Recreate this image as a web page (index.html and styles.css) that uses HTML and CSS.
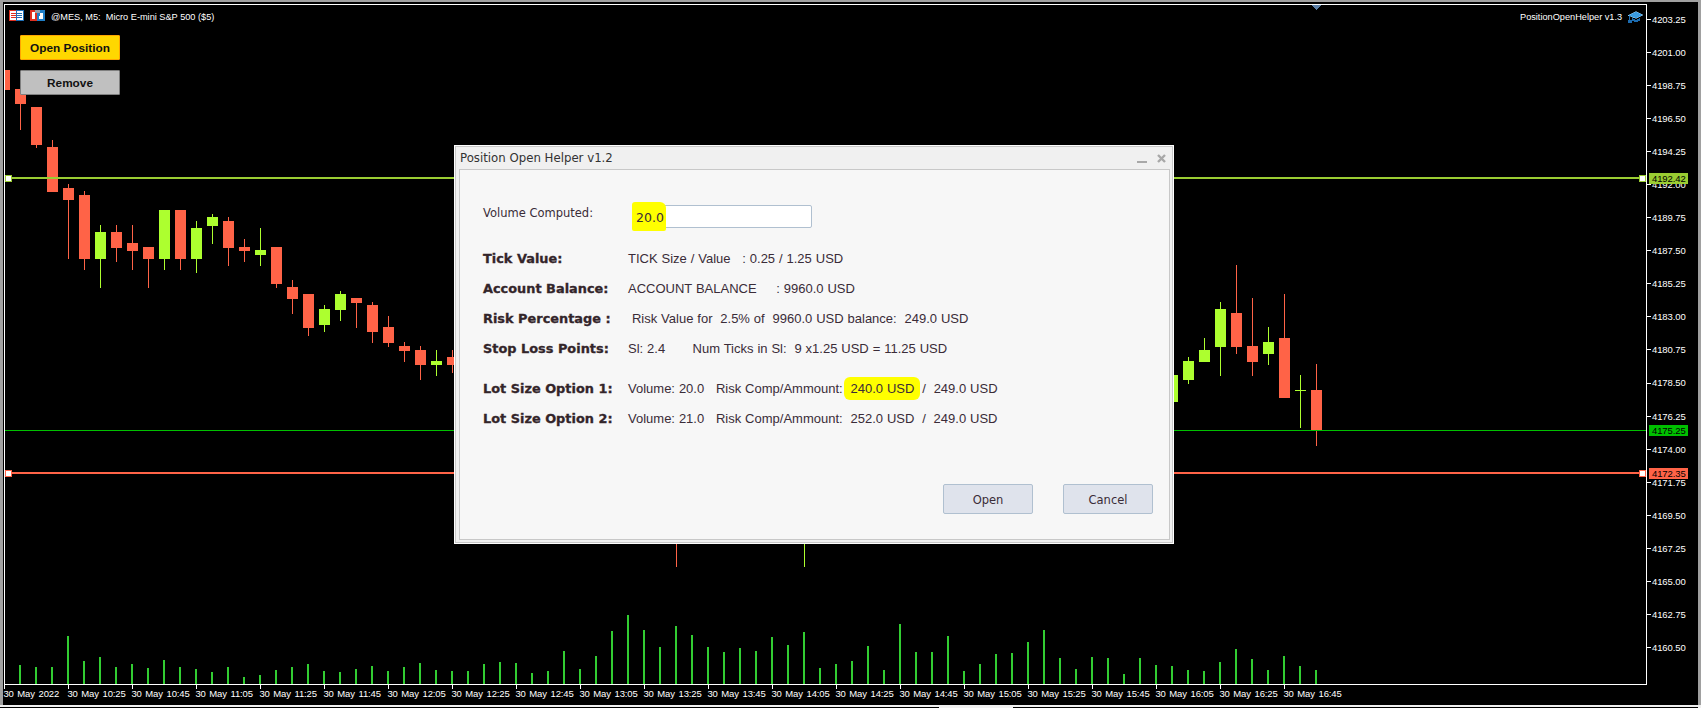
FILE: index.html
```html
<!DOCTYPE html>
<html>
<head>
<meta charset="utf-8">
<title>Position Open Helper</title>
<link rel="stylesheet" href="styles.css">
</head>
<body>
<div class="terminal">

<!-- chart: candles, volumes and axes -->
<svg class="chart" width="1701" height="708" viewBox="0 0 1701 708">
	<rect class="edge" x="0" y="0" width="1701" height="2"/>
	<rect class="edge" x="0" y="0" width="3" height="708"/>
	<rect class="edge" x="1698" y="0" width="3" height="708"/>
	<rect class="foot" x="0" y="705" width="1701" height="3"/>
	<rect class="foot-dark" x="0" y="707" width="939" height="1"/>
	<rect class="foot-dark" x="1013" y="707" width="685" height="1"/>

	<path class="frame" d="M4.5 4.5H1646.5V684.5H4.5Z"/>
	<path class="frame" d="M4.5 684V689M68.5 684V689M132.5 684V689M196.5 684V689M260.5 684V689M324.5 684V689M388.5 684V689M452.5 684V689M516.5 684V689M580.5 684V689M644.5 684V689M708.5 684V689M772.5 684V689M836.5 684V689M900.5 684V689M964.5 684V689M1028.5 684V689M1092.5 684V689M1156.5 684V689M1220.5 684V689M1284.5 684V689"/>
	<path class="frame" d="M1646 19.5H1651M1646 52.5H1651M1646 85.5H1651M1646 118.5H1651M1646 151.5H1651M1646 184.5H1651M1646 217.5H1651M1646 250.5H1651M1646 283.5H1651M1646 316.5H1651M1646 349.5H1651M1646 383.5H1651M1646 416.5H1651M1646 449.5H1651M1646 482.5H1651M1646 515.5H1651M1646 548.5H1651M1646 581.5H1651M1646 614.5H1651M1646 647.5H1651"/>
	<path class="arrow" d="M1311 5H1322L1316.5 10Z"/>

	<!-- wicks -->
	<path class="wick-red" d="M20.5 89V130M36.5 107V148M52.5 140V192M68.5 184V259M84.5 191V270M116.5 225V262M132.5 225V270M148.5 247V288M180.5 210V270M228.5 217V266M244.5 239V262M276.5 247V288M292.5 280V314M308.5 294V336M356.5 298V328M372.5 302V343M388.5 316V347M404.5 342V362M420.5 346V380M452.5 350V373M676.5 540V567M1236.5 265V354M1252.5 298V376M1284.5 294V398M1316.5 364V446"/>
	<path class="wick-green" d="M100.5 225V288M164.5 210V270M196.5 221V273M212.5 214V244M260.5 228V266M324.5 305V332M340.5 291V321M436.5 350V376M804.5 540V567M1188.5 357V384M1204.5 338V362M1220.5 302V376M1268.5 327V365M1300.5 375V428M1295 390.5H1306"/>

	<!-- bodies -->
	<path class="body-red" d="M5 70h5v20h-5zM15 89h11v15h-11zM31 107h11v38h-11zM47 147h11v45h-11zM63 188h11v12h-11zM79 195h11v64h-11zM111 232h11v16h-11zM127 243h11v8h-11zM143 247h11v12h-11zM175 210h11v49h-11zM223 221h11v27h-11zM239 247h11v4h-11zM271 247h11v37h-11zM287 287h11v12h-11zM303 294h11v34h-11zM351 298h11v5h-11zM367 305h11v27h-11zM383 327h11v16h-11zM399 346h11v5h-11zM415 350h11v15h-11zM447 357h8v8h-8zM1231 313h11v34h-11zM1247 346h11v16h-11zM1279 338h11v60h-11zM1311 390h11v41h-11z"/>
	<path class="body-green" d="M95 232h11v27h-11zM159 210h11v49h-11zM191 228h11v31h-11zM207 217h11v9h-11zM255 250h11v5h-11zM319 309h11v16h-11zM335 294h11v16h-11zM431 361h11v4h-11zM1167 375h11v27h-11zM1183 361h11v19h-11zM1199 350h11v12h-11zM1215 309h11v38h-11zM1263 342h11v12h-11z"/>

	<!-- volumes -->
	<path class="volume" d="M20 684v-19M36 684v-17M52 684v-17M68 684v-48M84 684v-23M100 684v-27M116 684v-17M132 684v-20M148 684v-16M164 684v-24M180 684v-17M196 684v-15M212 684v-12M228 684v-17M244 684v-7M260 684v-9M276 684v-14M292 684v-17M308 684v-20M324 684v-13M340 684v-12M356 684v-15M372 684v-18M388 684v-13M404 684v-17M420 684v-21M436 684v-14M452 684v-13M468 684v-13M484 684v-20M500 684v-22M516 684v-21M532 684v-11M548 684v-13M564 684v-33M580 684v-15M596 684v-28M612 684v-53M628 684v-69M644 684v-54M660 684v-37M676 684v-58M692 684v-49M708 684v-37M724 684v-32M740 684v-36M756 684v-33M772 684v-47M788 684v-39M804 684v-52M820 684v-16M836 684v-20M852 684v-23M868 684v-38M884 684v-14M900 684v-60M916 684v-32M932 684v-32M948 684v-48M964 684v-13M980 684v-20M996 684v-30M1012 684v-31M1028 684v-42M1044 684v-54M1060 684v-26M1076 684v-15M1092 684v-27M1108 684v-26M1124 684v-10M1140 684v-26M1156 684v-19M1172 684v-18M1188 684v-14M1204 684v-13M1220 684v-22M1236 684v-35M1252 684v-25M1268 684v-14M1284 684v-28M1300 684v-18M1316 684v-14"/>

	<!-- level lines -->
	<path class="line-sl" d="M5 178H1646"/>
	<path class="line-tp" d="M5 430.5H1646"/>
	<path class="line-en" d="M5 473H1646"/>
	<rect class="grip grip-sl" x="5.5" y="175.5" width="6" height="6"/>
	<rect class="grip grip-sl" x="1639.5" y="175.5" width="6" height="6"/>
	<rect class="grip grip-en" x="5.5" y="470.5" width="6" height="6"/>
	<rect class="grip grip-en" x="1639.5" y="470.5" width="6" height="6"/>

	<!-- price axis -->
	<g class="axis">
		<text x="1652" y="23">4203.25</text>
		<text x="1652" y="56">4201.00</text>
		<text x="1652" y="89">4198.75</text>
		<text x="1652" y="122">4196.50</text>
		<text x="1652" y="155">4194.25</text>
		<text x="1652" y="188">4192.00</text>
		<text x="1652" y="221">4189.75</text>
		<text x="1652" y="254">4187.50</text>
		<text x="1652" y="287">4185.25</text>
		<text x="1652" y="320">4183.00</text>
		<text x="1652" y="353">4180.75</text>
		<text x="1652" y="386">4178.50</text>
		<text x="1652" y="420">4176.25</text>
		<text x="1652" y="453">4174.00</text>
		<text x="1652" y="486">4171.75</text>
		<text x="1652" y="519">4169.50</text>
		<text x="1652" y="552">4167.25</text>
		<text x="1652" y="585">4165.00</text>
		<text x="1652" y="618">4162.75</text>
		<text x="1652" y="651">4160.50</text>
	</g>
	<rect class="tag-sl" x="1649" y="173" width="39" height="11"/>
	<rect class="tag-tp" x="1649" y="425" width="39" height="11"/>
	<rect class="tag-en" x="1649" y="468" width="39" height="11"/>
	<g class="axis axis-tag">
		<text x="1652" y="182">4192.42</text>
		<text x="1652" y="434">4175.25</text>
		<text x="1652" y="477">4172.35</text>
	</g>

	<!-- time axis -->
	<g class="axis axis-time">
		<text x="3.4" y="697">30 May 2022</text>
		<text x="67.4" y="697">30 May 10:25</text>
		<text x="131.4" y="697">30 May 10:45</text>
		<text x="195.4" y="697">30 May 11:05</text>
		<text x="259.4" y="697">30 May 11:25</text>
		<text x="323.4" y="697">30 May 11:45</text>
		<text x="387.4" y="697">30 May 12:05</text>
		<text x="451.4" y="697">30 May 12:25</text>
		<text x="515.4" y="697">30 May 12:45</text>
		<text x="579.4" y="697">30 May 13:05</text>
		<text x="643.4" y="697">30 May 13:25</text>
		<text x="707.4" y="697">30 May 13:45</text>
		<text x="771.4" y="697">30 May 14:05</text>
		<text x="835.4" y="697">30 May 14:25</text>
		<text x="899.4" y="697">30 May 14:45</text>
		<text x="963.4" y="697">30 May 15:05</text>
		<text x="1027.4" y="697">30 May 15:25</text>
		<text x="1091.4" y="697">30 May 15:45</text>
		<text x="1155.4" y="697">30 May 16:05</text>
		<text x="1219.4" y="697">30 May 16:25</text>
		<text x="1283.4" y="697">30 May 16:45</text>
	</g>

	<!-- header text and icons -->
	<text class="chart-title" x="51" y="20" xml:space="preserve">@MES, M5:  Micro E-mini S&amp;P 500 ($5)</text>
	<text class="chart-title" x="1520" y="20">PositionOpenHelper v1.3</text>

	<g class="icon-table">
		<rect class="ic-red" x="9.5" y="10.5" width="7" height="10"/>
		<rect class="ic-blue" x="16.5" y="10.5" width="7" height="10"/>
		<path class="ic-red" d="M11 13.5H16M11 15.5H16M11 17.5H16"/>
		<path class="ic-blue" d="M17 13.5H22M17 15.5H22M17 17.5H22"/>
	</g>
	<g class="icon-tpl">
		<path class="ic-fill-red" d="M30 10H37V21H30Z"/>
		<path class="ic-fill-blue" d="M37 10H45V21H37Z"/>
		<path class="ic-white" d="M32 12H35V19H32ZM40 13H43V19H39V16H40Z"/>
		<path class="ic-grey" d="M35 10H40V13H35Z"/>
	</g>
	<g class="icon-cap">
		<path class="ic-cap" d="M1628 15.5L1636 11.5L1643 15L1636 18.5Z"/>
		<path class="ic-cap-side" d="M1632 18V21L1636 22L1640 21V18L1636 20Z"/>
		<path class="ic-cap-pin" d="M1629.5 16V20M1628 20H1631V22H1628Z"/>
	</g>
</svg>

<a class="chart-btn btn-open" href="#">Open Position</a>
<a class="chart-btn btn-remove" href="#">Remove</a>

<!-- the EA window -->
<div class="dialog">
	<div class="dlg-title">
		<span>Position Open Helper v1.2</span>
		<span class="dlg-min"></span>
		<svg class="dlg-close" width="9" height="9" viewBox="0 0 9 9"><path d="M1 1L8 8M8 1L1 8"/></svg>
	</div>
	<div class="dlg-body">
		<div class="vol-row">
			<span class="vol-label">Volume Computed:</span>
			<div class="vol-box"><mark class="marker marker-vol">20.0</mark></div>
		</div>
		<div class="info-row"><b>Tick Value:</b><span>TICK Size / Value   : 0.25 / 1.25 USD</span></div>
		<div class="info-row"><b>Account Balance:</b><span>ACCOUNT BALANCE     : 9960.0 USD</span></div>
		<div class="info-row"><b>Risk Percentage :</b><span> Risk Value for  2.5% of  9960.0 USD balance:  249.0 USD</span></div>
		<div class="info-row"><b>Stop Loss Points:</b><span>Sl: 2.4       Num Ticks in Sl:  9 x1.25 USD = 11.25 USD</span></div>
		<div class="info-row lot-first"><b>Lot Size Option 1:</b><span>Volume: 20.0   Risk Comp/Ammount:  <mark class="marker marker-lot">240.0 USD</mark>  /  249.0 USD</span></div>
		<div class="info-row"><b>Lot Size Option 2:</b><span>Volume: 21.0   Risk Comp/Ammount:  252.0 USD  /  249.0 USD</span></div>
		<div class="dlg-buttons">
			<button class="dlg-btn">Open</button>
			<button class="dlg-btn">Cancel</button>
		</div>
	</div>
</div>

</div>
</body>
</html>
```

FILE: styles.css
```css
html, body {
	margin: 0;
	padding: 0;
	background-color: #000;
}

.terminal {
	position: relative;
	width: 1701px;
	height: 708px;
	overflow: hidden;
	background-color: #000;
}

.chart {
	display: block;
	shape-rendering: crispEdges;
}

.edge { fill: #a0a0a0; }
.foot { fill: #f0f0f0; }
.foot-dark { fill: #000; }
.frame { fill: none; stroke: #fff; stroke-width: 1; }
.arrow { fill: #5b7fa6; }

.wick-red { fill: none; stroke: #ff6347; stroke-width: 1; }
.wick-green { fill: none; stroke: #adff2f; stroke-width: 1; }
.body-red { fill: #ff6347; }
.body-green { fill: #adff2f; }
.volume { fill: none; stroke: #32cd32; stroke-width: 2; }

.line-sl { fill: none; stroke: #9acd32; stroke-width: 2; }
.line-tp { fill: none; stroke: #00c000; stroke-width: 1; }
.line-en { fill: none; stroke: #ff6347; stroke-width: 2; }
.grip { fill: #fff; stroke-width: 1; }
.grip-sl { stroke: #9acd32; }
.grip-en { stroke: #ff6347; }
.tag-sl { fill: #9acd32; }
.tag-tp { fill: #00c000; }
.tag-en { fill: #ff6347; }

.axis text {
	font-family: "Liberation Sans", Arial, sans-serif;
	font-size: 9.5px;
	fill: #fff;
	letter-spacing: -0.1px;
}
.axis-tag text { fill: #000; }
.axis-time text { letter-spacing: -0.15px; word-spacing: 1.2px; }

.chart-title {
	font-family: "Liberation Sans", Arial, sans-serif;
	font-size: 9.2px;
	fill: #fff;
	white-space: pre;
}

.ic-red { fill: #fff; stroke: #e03020; stroke-width: 1; }
.ic-blue { fill: #fff; stroke: #1f6fb5; stroke-width: 1; }
.ic-fill-red { fill: #e03020; }
.ic-fill-blue { fill: #1f7fc8; }
.ic-white { fill: #fff; }
.ic-grey { fill: #9aa0a8; }
.ic-cap { fill: #3b9be0; stroke: #9fd4f5; stroke-width: 0.5; }
.ic-cap-side { fill: #1c6cb0; }
.ic-cap-pin { fill: #1c6cb0; stroke: #1c6cb0; stroke-width: 1; }

/* buttons on the chart */
.chart-btn {
	position: absolute;
	left: 20px;
	width: 100px;
	height: 25px;
	box-sizing: border-box;
	border: 1px solid;
	border-radius: 1px;
	font-family: "Liberation Sans", Arial, sans-serif;
	font-size: 11.8px;
	font-weight: bold;
	line-height: 25px;
	text-align: center;
	text-decoration: none;
	color: #111;
}
.btn-open {
	top: 35px;
	background-color: #ffd700;
	border-color: #ffa500;
}
.btn-remove {
	top: 70px;
	background-color: #c0c0c0;
	border-color: #808080;
}

/* dialog */
.dialog {
	position: absolute;
	left: 454px;
	top: 145px;
	width: 720px;
	height: 399px;
	box-sizing: border-box;
	display: flex;
	flex-direction: column;
	padding: 0 3px 3px 4px;
	border: 1px solid #fff;
	box-shadow: inset 0 0 0 1px #c8c8c8;
	background-color: #f0f0f0;
	font-family: "Liberation Sans", Arial, sans-serif;
	color: #3a2c38;
}

.dlg-title {
	display: flex;
	align-items: center;
	gap: 10px;
	height: 23px;
	box-sizing: border-box;
	padding: 1px 4px 0 1px;
	font-family: "DejaVu Sans", Verdana, sans-serif;
	font-size: 11.75px;
	color: #333;
}
.dlg-title span:first-child { flex: 1; }
.dlg-min {
	width: 10px;
	height: 2px;
	margin-top: 8px;
	background-color: #a8a8a8;
}
.dlg-close path {
	fill: none;
	stroke: #a8a8a8;
	stroke-width: 2.4;
}

.dlg-body {
	flex: 1;
	display: flex;
	flex-direction: column;
	padding: 35px 16px 25px 23px;
	border: 1px solid #c8c8c8;
	background-color: #f7f7f7;
}

.vol-row {
	display: flex;
	height: 23px;
	margin-bottom: 15px;
}
.vol-label {
	width: 149px;
	margin-top: 1px;
	font-family: "DejaVu Sans", Verdana, sans-serif;
	font-size: 11.5px;
	line-height: 14px;
}
.vol-box {
	width: 180px;
	box-sizing: border-box;
	padding-left: 4px;
	border: 1px solid #b0c0d0;
	border-radius: 2px;
	background-color: #fff;
	font-family: "DejaVu Sans", Verdana, sans-serif;
	font-size: 12.5px;
	line-height: 23px;
}

.info-row {
	display: flex;
	align-items: center;
	height: 30px;
	font-size: 13px;
	word-spacing: 0.3px;
	white-space: pre;
}
.info-row b {
	flex: none;
	width: 145px;
	margin-top: 1px;
	font-family: "DejaVu Sans", Verdana, sans-serif;
	font-size: 12.9px;
	font-weight: bold;
	word-spacing: 0;
	color: #33252a;
	-webkit-text-stroke: 0.3px #33252a;
}
.lot-first { margin-top: 10px; }

/* yellow marker strokes */
.marker {
	color: inherit;
	background-color: #ffff00;
}
.marker-vol {
	display: inline-block;
	margin: -5px 0 -2px -5px;
	padding: 4px 2px 2px 4px;
	border-radius: 3px 6px 2px 2px;
}
.marker-lot {
	padding: 4px 6px;
	margin: 0 -6px;
	border-radius: 6px;
}

.dlg-buttons {
	display: flex;
	justify-content: flex-end;
	gap: 30px;
	margin-top: auto;
}
.dlg-btn {
	width: 90px;
	height: 30px;
	padding-top: 2px;
	border: 1px solid #b0c0d0;
	border-radius: 2px;
	background-color: #dfe3ec;
	font-family: "DejaVu Sans", Verdana, sans-serif;
	font-size: 11.5px;
	color: #3a2c38;
}
```
